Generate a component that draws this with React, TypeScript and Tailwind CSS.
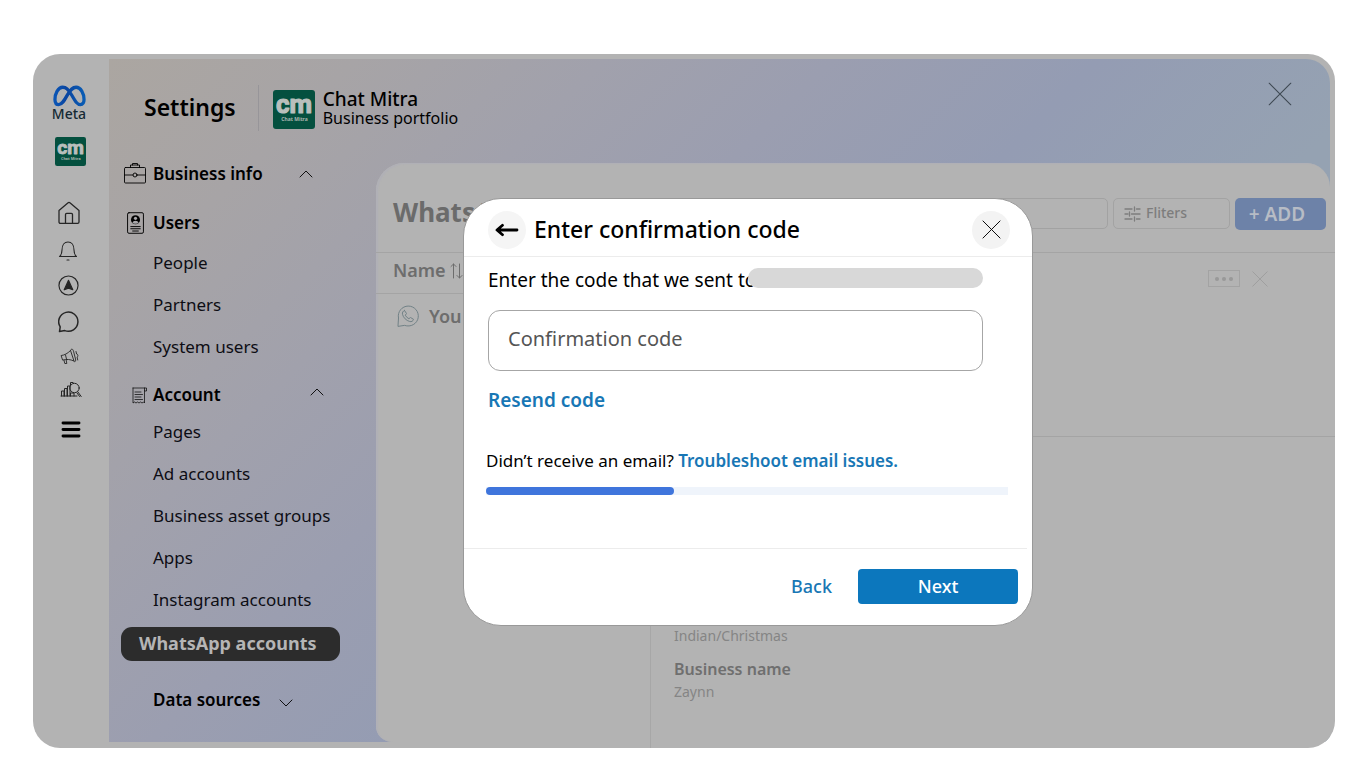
import React from "react";

const rootFont = "font-['Noto_Sans','Open_Sans',sans-serif]";

function MetaMark() {
  return (
    <svg viewBox="0 0 32 21" className="h-[22px] w-[33px]" fill="none" aria-hidden="true">
      <defs>
        <linearGradient id="meta" x1="0" y1="0" x2="1" y2="0">
          <stop offset="0" stopColor="#0b55b5" />
          <stop offset="0.4" stopColor="#0a45a0" />
          <stop offset="1" stopColor="#0a5cb4" />
        </linearGradient>
      </defs>
      <path
        d="M9.3 2C5 2 1.9 8.300 1.900 13.800c0 3.200 1.400 5 3.700 5 3 0 4.700-2.800 8.400-9.400C17.200 4 19 2 22.400 2c4.500 0 7.700 6 7.700 12 0 3.100-1.200 4.800-3.500 4.800-3 0-4.600-2.500-8.200-8.800C14.700 3.600 12.700 2 9.300 2Z"
        stroke="url(#meta)"
        strokeWidth="3.200"
      />
    </svg>
  );
}

function ChatMitraLogo({ className }: { className: string }) {
  return (
    <svg viewBox="0 0 42 39" className={className} role="img" aria-label="Chat Mitra">
      <rect width="42" height="39" rx="3" fill="#04503f" />
      <text x="21" y="22.500" textAnchor="middle" fontFamily="Roboto, Noto Sans, sans-serif" fontWeight="700" fontSize="26" fill="#b9bfbc" stroke="#b9bfbc" strokeWidth="1.200" strokeLinejoin="round">cm</text>
      <text x="21.500" y="31" textAnchor="middle" fontFamily="Noto Sans, sans-serif" fontWeight="700" fontSize="5" fill="#a8b5b0">Chat Mitra</text>
    </svg>
  );
}

function Icon({ className, box = "0 0 24 24", width = 1.5, children }: { className: string; box?: string; width?: number; children: React.ReactNode }) {
  return (
    <svg viewBox={box} className={className} fill="none" stroke="currentColor" strokeWidth={width} strokeLinecap="round" strokeLinejoin="round" aria-hidden="true">
      {children}
    </svg>
  );
}

function Cross({ className, width = 1 }: { className: string; width?: number }) {
  return (
    <Icon className={className} box="0 0 20 20" width={width}>
      <path d="M1 1l18 18M19 1L1 19" />
    </Icon>
  );
}

function Chevron({ up = false, className = "" }: { up?: boolean; className?: string }) {
  return (
    <Icon className={`h-[8px] w-[14px] ${className}`} box="0 0 14 8" width={0.9}>
      <path d={up ? "M1 7l6-6 6 6" : "M1 1l6 6 6-6"} />
    </Icon>
  );
}

function RailButton({ label, children, className }: { label: string; children: React.ReactNode; className: string }) {
  return (
    <button type="button" aria-label={label} className={`flex w-6 items-center justify-center ${className}`}>
      {children}
    </button>
  );
}

function Rail() {
  return (
    <aside className="flex w-[76px] shrink-0 flex-col items-center pt-[31px] pr-[4px] text-[#262626]">
      <MetaMark />
      <span className="text-[14px] leading-[14px] font-medium text-[#152a33]">Meta</span>
      <ChatMitraLogo className="mt-[16px] ml-[2px] h-[29px] w-[31px]" />
      <RailButton label="Home" className="mt-[35px] h-[24px]">
        <Icon className="h-[24px] w-[24px]" box="0 0 24 24" width={1.3}>
          <path d="M2 9.500L10.800 1.900c.7-.6 1.700-.6 2.400 0L22 9.500V21c0 .8-.6 1.400-1.400 1.400H3.400C2.600 22.400 2 21.800 2 21zM8.500 22.400v-9c0-.6.5-1.100 1.100-1.100h4.800c.6 0 1.100.5 1.100 1.100v9" />
        </Icon>
      </RailButton>
      <RailButton label="Notifications" className="mt-[16px] mr-[2px] h-[20px]">
        <Icon className="h-[20px] w-[20px]" box="0 0 20 20" width={1.1}>
          <path d="M1.500 15.500h17c-2-1.600-2.500-3.500-2.500-6.500C16 4 13.500 1 10 1S4 4 4 9c0 3-.5 4.900-2.500 6.500zM9 19h2" />
        </Icon>
      </RailButton>
      <RailButton label="Navigate" className="mt-[14px] mr-[2px] h-[21px]">
        <Icon className="h-[21px] w-[21px]" box="0 0 22 22" width={1.2}>
          <circle cx="11" cy="11" r="10" />
          <path d="M11 5.500l4.500 10L11 13.800 6.500 15.500z" fill="currentColor" />
        </Icon>
      </RailButton>
      <RailButton label="Chats" className="mt-[15px] h-[22px]">
        <Icon className="h-[22px] w-[22px]" box="0 0 22 22" width={1.5}>
          <path d="M1.500 20.600l.7-4.800a9.600 9.600 0 1 1 4.600 3.800z" />
        </Icon>
      </RailButton>
      <RailButton label="Campaigns" className="mt-[14px] h-[18px]">
        <Icon className="h-[17px] w-[19px]" box="0 0 19 17" width={0.9}>
          <path d="M1.500 7.500c3-.3 6-2 9-5l3.500 10.500c-4-1.700-7-2-11-1zM5.500 7l1.200 4.800M4 12.300l.8 3.200h2l-.6-3.200M10.500 2.500c.8-2.200 2.300-1.800 3 .7l2 7.800c.6 2.400-.7 3.500-1.700 2.200M16 3.500l.6 2.500c1.500 0 1.800 2.500.5 3l.6 3" />
        </Icon>
      </RailButton>
      <RailButton label="Insights" className="mt-[15px] ml-[3px] h-[18px]">
        <Icon className="h-[18px] w-[22px]" box="0 0 22 18" width={1}>
          <path d="M1 16h16M1.500 16v-5H4v5M4.500 16V8.500h2.500V16M7.500 16V6H10v10M10.500 16v-3H14v3M10.500 5V2.500h2.500" />
          <circle cx="14.500" cy="8" r="4.700" />
          <path d="M17.800 11.800l3.400 4.700M17 13l2.600 3.500" />
        </Icon>
      </RailButton>
      <RailButton label="Menu" className="mt-[22px] ml-[4px] h-[18px] text-black">
        <Icon className="h-[17px] w-[20px]" box="0 0 20 17" width={2.9}>
          <path d="M2 2h16M2 8.500h16M2 15h16" />
        </Icon>
      </RailButton>
    </aside>
  );
}

function NavHeading({ icon, label, chevron, className = "" }: { icon?: React.ReactNode; label: string; chevron?: React.ReactNode; className?: string }) {
  return (
    <button type="button" className={`flex h-[22px] items-center text-left text-[17px] font-semibold text-black ${className}`}>
      <span className="flex w-[44px] shrink-0 items-center justify-end pr-[7px]">{icon}</span>
      <span>{label}</span>
      {chevron}
    </button>
  );
}

function NavLinks({ items, className }: { items: string[]; className: string }) {
  return (
    <ul className={className}>
      {items.map((item) => (
        <li key={item}>
          <a href="#" className="flex h-[42px] items-center pl-[44px] text-[17px] text-[#0d0d14]">
            {item}
          </a>
        </li>
      ))}
    </ul>
  );
}

function Sidebar() {
  return (
    <nav className="flex w-[267px] shrink-0 flex-col items-start whitespace-nowrap">
      <NavHeading
        label="Business info"
        icon={
          <Icon className="h-[22px] w-[22px]" box="0 0 22 22" width={0.9}>
            <rect x="0.500" y="4.500" width="21" height="15.500" rx="1" />
            <path d="M6.500 4.500V2h9v2.500M8.500 2V.5h5V2M.5 12h8.500M13 12h8.500" />
            <circle cx="11" cy="12" r="2" />
          </Icon>
        }
        chevron={<Chevron up className="ml-[36px]" />}
      />
      <NavHeading
        className="mt-[27px]"
        label="Users"
        icon={
          <Icon className="mr-[2px] h-[22px] w-[17px]" box="0 0 18 23" width={1}>
            <rect x="0.600" y="0.600" width="16.800" height="21.800" rx="1.500" />
            <circle cx="9" cy="8" r="4.800" fill="currentColor" stroke="none" />
            <circle cx="9" cy="6.600" r="1.700" fill="#a8a6a9" stroke="none" />
            <path d="M5.800 11.300c.5-3 5.900-3 6.400 0-1.500 1.500-4.900 1.500-6.400 0z" fill="#a8a6a9" stroke="none" />
            <path d="M4 15.300h10M4 17.600h10M6 20h6" />
          </Icon>
        }
      />
      <NavLinks className="mt-[8px]" items={["People", "Partners", "System users"]} />
      <NavHeading
        className="mt-[16px]"
        label="Account"
        icon={
          <Icon className="-mr-[2px] h-[17px] w-[16px]" box="0 0 16 17" width={0.7}>
            <path d="M1 1h13.500v3H12.500V1M1 1v15l1.500-1 1.500 1 1.500-1 1.500 1 1.500-1 1.500 1 1.500-1 1 1V4M3 5h6M3 7.500h7.500M3 10h6M3 12.500h7.500" />
          </Icon>
        }
        chevron={<Chevron up className="mb-[6px] ml-[89px]" />}
      />
      <NavLinks className="mt-[5px]" items={["Pages", "Ad accounts", "Business asset groups", "Apps", "Instagram accounts"]} />
      <a href="#" aria-current="page" className="mt-[6px] ml-[12px] flex h-[34px] w-[219px] items-center rounded-[11px] bg-[#2c2c2c] pb-px pl-[18px] text-[18px] font-bold text-[#b5b5b5]">
        WhatsApp accounts
      </a>
      <NavHeading className="mt-[28px]" label="Data sources" chevron={<Chevron className="mt-[6px] ml-[19px]" />} />
    </nav>
  );
}

function AccountsPanel() {
  return (
    <main className="flex min-w-0 flex-1 flex-col rounded-tl-[28px] rounded-tr-[24px] rounded-bl-[16px] bg-[#b3b3b3] shadow-[inset_2px_1px_1px_#b0b0b6]">
      <div className="flex h-[89px] shrink-0 items-start pt-[35px] pr-1 pl-[17px]">
        <h1 className="w-[300px] shrink-0 text-[26px] leading-[28px] font-bold whitespace-nowrap text-[#6b6b6b]">WhatsApp</h1>
        <input type="search" aria-label="Search accounts" className="h-[31px] min-w-0 flex-1 rounded-[5px] border border-[#a2a2a2]" />
        <button type="button" className="ml-[5px] flex h-[31px] w-[117px] items-center gap-[5px] rounded-[5px] border border-[#a3a3a3] pl-[10px] text-[14px] font-medium text-[#7d7d7d]">
          <Icon className="h-[16px] w-[17px]" box="0 0 17 16" width={1.3}>
            <path d="M1 3h7M12.500 3H16M10.500 1v4M1 8h3M7.500 8H16M5.500 6v4M1 13h7M12.500 13H16M10.500 11v4" />
          </Icon>
          <span className="pb-[3px]">Fliters</span>
        </button>
        <button type="button" className="ml-[5px] h-[32px] w-[91px] rounded-[5px] bg-[#6d82a8] pr-[7px] text-[19px] font-semibold text-[#b7bcc5]">
          + ADD
        </button>
      </div>
      <div className="-mr-[5px] -mb-[6px] flex flex-1 border-t border-[#a4a4a4]">
        <div className="w-[275px] shrink-0 border-r border-[#a7a7a7]">
          <table className="w-full text-left text-[18px] text-[#6d6d6d]">
            <thead>
              <tr className="h-[40px] border-b border-[#a4a4a4]">
                <th className="pb-[4px] pl-[17px] font-semibold">
                  <span className="flex items-center gap-[4px]">
                    Name
                    <Icon className="h-[16px] w-[13px]" box="0 0 13 16" width={1}>
                      <path d="M3.500 15V1M1 3.500L3.500 1 6 3.500M9.500 1v14M7 12.500L9.500 15l2.500-2.500" />
                    </Icon>
                  </span>
                </th>
              </tr>
            </thead>
            <tbody>
              <tr className="h-[46px]">
                <td className="pl-[21px] font-semibold">
                  <span className="flex items-center gap-[10px]">
                    <Icon className="h-[22px] w-[22px] text-[#718186]" box="0 0 22 22" width={1}>
                      <path d="M1 21l.5-8A10 10 0 1 1 8 20.500z" />
                      <path d="M7.500 5.500l2 3-1.200 1.700c.8 1.600 2 2.800 3.600 3.500l1.600-1.200 3 1.800c-.5 2-2 2.700-3.800 2.200-3.500-1-6.300-3.700-7.200-7.200-.4-1.700.4-3.300 2-3.800z" />
                    </Icon>
                    You
                  </span>
                </td>
              </tr>
            </tbody>
          </table>
        </div>
        <section className="flex min-w-0 flex-1 flex-col">
          <div className="flex h-[184px] items-start justify-end gap-[12px] border-b border-[#a4a4a4] pt-[17px] pr-[67px] text-[#999]">
            <button type="button" aria-label="More options" className="flex h-[17px] w-[32px] items-center justify-center gap-[3px] border border-[#a3a3a3]">
              <span className="size-[4px] rounded-full bg-[#999]" />
              <span className="size-[4px] rounded-full bg-[#999]" />
              <span className="size-[4px] rounded-full bg-[#999]" />
            </button>
            <button type="button" aria-label="Close details" className="py-px">
              <Cross className="h-[16px] w-[16px]" />
            </button>
          </div>
          <dl className="mt-auto pb-[45px] pl-[23px] text-[14px] leading-[22px] text-[#858585]">
            <dd>Indian/Christmas</dd>
            <dt className="mt-[10px] text-[16px] leading-[24px] font-semibold text-[#6f6f6f]">Business name</dt>
            <dd>Zaynn</dd>
          </dl>
        </section>
      </div>
    </main>
  );
}

function ConfirmationDialog() {
  return (
    <div role="dialog" aria-labelledby="dialog-title" className="flex h-[428px] w-[570px] flex-col rounded-[38px] border border-[#999] bg-white">
      <header className="flex h-[58px] shrink-0 items-center border-b border-[#ececec] pt-[4px] pr-[22px] pl-[24px]">
        <button type="button" aria-label="Go back" className="flex size-[38px] items-center justify-center rounded-full bg-[#f5f5f5]">
          <Icon className="h-[14px] w-[24px] text-black" box="0 0 24 14" width={2.8}>
            <path d="M22 7H2.500M7.500 2.300L2 7l5.500 4.700" />
          </Icon>
        </button>
        <h2 id="dialog-title" className="ml-[8px] flex-1 text-[23px] font-medium text-black">Enter confirmation code</h2>
        <button type="button" aria-label="Close dialog" className="flex size-[38px] items-center justify-center rounded-full bg-[#f3f3f3] text-black">
          <Cross className="h-[19px] w-[19px]" width={1} />
        </button>
      </header>
      <div className="flex-1 pr-[24px] pl-[22px]">
        <div className="mr-[25px] ml-[2px]">
          <div className="relative pt-[9px]">
            <label htmlFor="code" className="block text-[19px] leading-[28px] text-black">Enter the code that we sent to</label>
            <span className="absolute top-[11px] right-0 h-[20px] w-[235px] rounded-full bg-[#d8d8d8]" />
          </div>
          <input id="code" type="text" placeholder="Confirmation code" className="mt-[16px] block h-[61px] w-full rounded-[12px] border border-[#a6a6a6] px-[19px] pb-[4px] text-[20px] text-black placeholder:text-[#555]" />
          <button type="button" className="mt-[15px] block text-[19px] leading-[28px] font-semibold text-[#1877b5]">Resend code</button>
        </div>
        <p className="mt-[35px] text-[17px] leading-[24px] text-black">
          Didn’t receive an email?{" "}
          <a href="#" className="font-semibold text-[#1877b5]">Troubleshoot email issues.</a>
        </p>
        <div role="progressbar" aria-valuenow={36} aria-valuemin={0} aria-valuemax={100} className="mt-[14px] h-[8px] bg-[#eff4fb]">
          <div className="h-full w-[36%] rounded-full bg-[#3f75dc]" />
        </div>
      </div>
      <footer className="mr-[5px] flex h-[77px] shrink-0 items-start justify-end gap-[26px] border-t border-[#ececec] pt-[20px] pr-[9px] text-[18px] font-medium">
        <button type="button" className="h-[35px] text-[#1877b5]">Back</button>
        <button type="button" className="h-[35px] w-[160px] rounded-[4px] bg-[#0c77bd] text-white">Next</button>
      </footer>
    </div>
  );
}

export default function App() {
  return (
    <div className={`min-h-screen bg-white pt-[54px] pr-[31px] pb-[20px] pl-[33px] ${rootFont}`}>
      <div className="relative flex min-h-[694px] overflow-hidden rounded-[27px] bg-[#b3b3b3]">
        <Rail />
        <div className="flex min-w-0 flex-1 flex-col pt-[5px] pr-[5px] pb-[6px]">
          <div className="flex flex-1 flex-col rounded-tr-[24px] bg-[linear-gradient(135deg,#aba6a1_0%,#a7a4a6_13%,#a1a1ac_26%,#9b9eb0_38%,#949cb3_52%,#95a2b2_68%)]">
            <header className="flex h-[104px] shrink-0 items-start pr-[38px] pl-[35px] text-black">
              <strong className="mt-[32px] text-[23px] leading-[32px] font-semibold">Settings</strong>
              <div className="mt-[26px] ml-[22px] h-[46px] w-px bg-[#979599]" />
              <ChatMitraLogo className="mt-[31px] ml-[14px] h-[39px] w-[42px]" />
              <div className="mt-[30px] ml-[8px] flex-1">
                <div className="text-[19px] leading-[21px] font-medium">Chat Mitra</div>
                <div className="text-[16px] leading-[17px]">Business portfolio</div>
              </div>
              <button type="button" aria-label="Close settings" className="mt-[23px] text-[#3e4852]">
                <Cross className="h-[24px] w-[24px]" width={0.9} />
              </button>
            </header>
            <div className="flex flex-1">
              <Sidebar />
              <AccountsPanel />
            </div>
          </div>
        </div>
        <div className="absolute inset-0 flex items-start justify-center pt-[144px] pl-[128px]">
          <ConfirmationDialog />
        </div>
      </div>
    </div>
  );
}
